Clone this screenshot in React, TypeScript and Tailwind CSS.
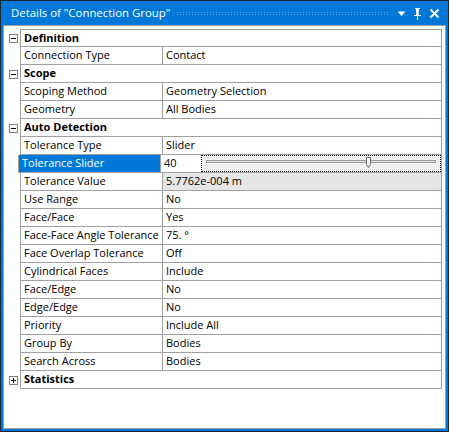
import React from 'react'

type Row =
  | { kind: 'cat'; label: string; open: boolean }
  | { kind: 'prop'; label: string; value: string; tone?: 'selected' | 'readonly' | 'slider' }

const ROWS: Row[] = [
  { kind: 'cat', label: 'Definition', open: true },
  { kind: 'prop', label: 'Connection Type', value: 'Contact' },
  { kind: 'cat', label: 'Scope', open: true },
  { kind: 'prop', label: 'Scoping Method', value: 'Geometry Selection' },
  { kind: 'prop', label: 'Geometry', value: 'All Bodies' },
  { kind: 'cat', label: 'Auto Detection', open: true },
  { kind: 'prop', label: 'Tolerance Type', value: 'Slider' },
  { kind: 'prop', label: 'Tolerance Slider', value: '40', tone: 'slider' },
  { kind: 'prop', label: 'Tolerance Value', value: '5.7762e-004 m', tone: 'readonly' },
  { kind: 'prop', label: 'Use Range', value: 'No' },
  { kind: 'prop', label: 'Face/Face', value: 'Yes' },
  { kind: 'prop', label: 'Face-Face Angle Tolerance', value: '75. °' },
  { kind: 'prop', label: 'Face Overlap Tolerance', value: 'Off' },
  { kind: 'prop', label: 'Cylindrical Faces', value: 'Include' },
  { kind: 'prop', label: 'Face/Edge', value: 'No' },
  { kind: 'prop', label: 'Edge/Edge', value: 'No' },
  { kind: 'prop', label: 'Priority', value: 'Include All' },
  { kind: 'prop', label: 'Group By', value: 'Bodies' },
  { kind: 'prop', label: 'Search Across', value: 'Bodies' },
  { kind: 'cat', label: 'Statistics', open: false },
]

function ToggleBox({ open }: { open: boolean }) {
  return (
    <svg width="9" height="9" viewBox="0 0 9 9" className="block">
      <rect x="0.5" y="0.5" width="8" height="8" fill="#fff" stroke="#808080" />
      <line x1="2" y1="4.5" x2="7" y2="4.5" stroke="#000" />
      {!open && <line x1="4.5" y1="2" x2="4.5" y2="7" stroke="#000" />}
    </svg>
  )
}

function Slider() {
  return (
    <div className="flex h-full flex-1 items-center border border-dotted border-black bg-[#f0f0f0]">
      <svg width="238" height="15" viewBox="0 0 238 15" className="block">
        <rect x="4.5" y="4.5" width="229" height="2" fill="#e7e7e7" stroke="#9a9a9a" />
        <path d="M164.5 1.5 h4 v7 l-2 3 l-2 -3 z" fill="#f4f4f4" stroke="#6e6e6e" />
      </svg>
    </div>
  )
}

export default function App() {
  return (
    <div
      className="h-[433px] w-[450px] bg-white"
      style={{ fontFamily: '"Open Sans", "Noto Sans", sans-serif' }}
    >
      <div className="flex h-[432px] w-[449px] flex-col border border-[#1a2633] bg-[#0078d7] px-[2px] pb-[2px]">
        <div className="flex h-[24px] items-center pl-[8px] pr-[6px] text-white">
          <span className="text-[11.4px] leading-none">Details of "Connection Group"</span>
          <div
            className="mx-[6px] h-[5px] flex-1"
            style={{
              backgroundImage: 'radial-gradient(circle, #7fb6e8 0.7px, transparent 0.8px)',
              backgroundSize: '3px 2.5px',
            }}
          />
          <svg width="11" height="11" viewBox="0 0 11 11" className="mr-[5px]">
            <path d="M1.5 3.5 h8 l-4 4.5 z" fill="#fff" />
          </svg>
          <svg width="11" height="13" viewBox="0 0 11 13" className="mr-[6px]">
            <path d="M3 1 h5 v1 h-1 v6 h2 v1 h-3 v4 h-1 v-4 h-3 v-1 h2 v-6 h-1 z" fill="#fff" />
            <rect x="6" y="2" width="1" height="6" fill="#cfe4f7" />
          </svg>
          <svg width="11" height="11" viewBox="0 0 11 11">
            <path d="M1.5 1.5 L9.5 9.5 M9.5 1.5 L1.5 9.5" stroke="#fff" strokeWidth="2" />
          </svg>
        </div>
        <div className="flex-1 border border-[#a0a0a0] bg-white pt-[3px] text-[11px] text-black">
          {ROWS.map((row, i) => (
            <div key={i} className="flex h-[18px]">
              <div className="flex w-[16px] items-center justify-end pr-[2px]">
                {row.kind === 'cat' && <ToggleBox open={row.open} />}
              </div>
              <div
                className={`mr-[3px] flex flex-1 border-x border-b border-[#a0a0a0] ${i === 0 ? 'border-t' : ''}`}
              >
                {row.kind === 'cat' ? (
                  <div className="flex items-center pl-[3px] font-bold">{row.label}</div>
                ) : (
                  <>
                    <div
                      className={`flex w-[142px] shrink-0 items-center border-r border-[#a0a0a0] pl-[3px] ${
                        row.tone === 'selected' || row.tone === 'slider' ? 'bg-[#0078d7] text-white' : ''
                      }`}
                    >
                      {row.label}
                    </div>
                    {row.tone === 'slider' ? (
                      <div className="flex flex-1 items-center">
                        <span className="w-[40px] pl-[3px]">{row.value}</span>
                        <Slider />
                      </div>
                    ) : (
                      <div
                        className={`flex flex-1 items-center pl-[3px] ${
                          row.tone === 'readonly' ? 'bg-[#e6e6e6]' : ''
                        }`}
                      >
                        {row.value}
                      </div>
                    )}
                  </>
                )}
              </div>
            </div>
          ))}
        </div>
      </div>
    </div>
  )
}
